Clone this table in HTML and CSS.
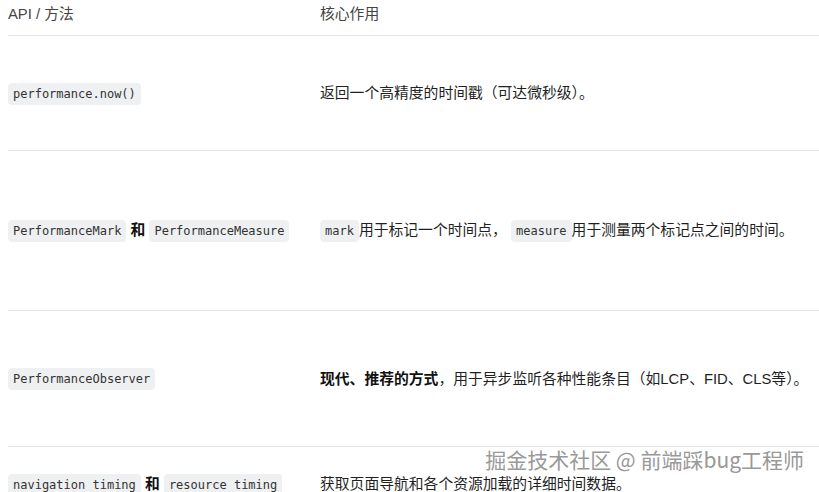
FILE: index.html
```html
<!DOCTYPE html>
<html lang="zh-CN">
<head>
    <meta charset="UTF-8">
    <meta name="viewport" content="width=device-width, initial-scale=1.0">
    <title>Performance API</title>
    <link rel="stylesheet" href="styles.css">
</head>
<body>
    <table class="api-table">
        <thead>
            <tr>
                <th class="col-api">API / 方法</th>
                <th class="col-desc">核心作用</th>
            </tr>
        </thead>
        <tbody>
            <tr class="row-now">
                <td><code>performance.now()</code></td>
                <td>返回一个高精度的时间戳（可达微秒级）。</td>
            </tr>
            <tr class="row-mark">
                <td><code>PerformanceMark</code> <strong>和</strong> <code>PerformanceMeasure</code></td>
                <td><code>mark</code>用于标记一个时间点， <code>measure</code>用于测量两个标记点之间的时间。</td>
            </tr>
            <tr class="row-observer">
                <td><code>PerformanceObserver</code></td>
                <td><strong>现代、推荐的方式</strong>，用于异步监听各种性能条目（如LCP、FID、CLS等）。</td>
            </tr>
            <tr class="row-timing">
                <td><code>navigation timing</code> <strong>和</strong> <code>resource timing</code></td>
                <td>获取页面导航和各个资源加载的详细时间数据。</td>
            </tr>
        </tbody>
    </table>

    <div class="watermark">掘金技术社区 @ 前端踩bug工程师</div>
</body>
</html>
```

FILE: styles.css
```css
body {
    margin: 0 0 0 8px;
    font-family: "Liberation Sans", "Noto Sans CJK SC", sans-serif;
    font-size: 14.8px;
    color: #1f1f1f;
    background: #fff;
    overflow: hidden;
}

.api-table {
    width: 811px;
    border-collapse: collapse;
}

.api-table th {
    text-align: left;
    font-weight: normal;
    color: #444;
    line-height: 20px;
    padding: 4px 0 11px;
    border-bottom: 1px solid #e4e4e4;
}

.col-api {
    width: 312px;
}

.api-table td {
    padding: 0;
    line-height: 22px;
    vertical-align: middle;
    border-bottom: 1px solid #e4e4e4;
}

.row-now td {
    height: 114px;
}

.row-mark td {
    height: 159px;
}

.row-observer td {
    height: 135px;
}

.row-timing td {
    height: 74px;
}

strong {
    font-weight: bold;
    color: #111;
}

code {
    font-family: "DejaVu Sans Mono", monospace;
    font-size: 12px;
    color: #333;
    background-color: #eef0f2;
    border-radius: 4px;
    padding: 4px 5px;
}

.watermark {
    position: absolute;
    top: 446px;
    right: 15px;
    font-family: "Noto Sans CJK SC", sans-serif;
    font-size: 21px;
    line-height: 26px;
    color: #999;
    text-shadow: 0 0 1px #fff;
    white-space: nowrap;
}
```
